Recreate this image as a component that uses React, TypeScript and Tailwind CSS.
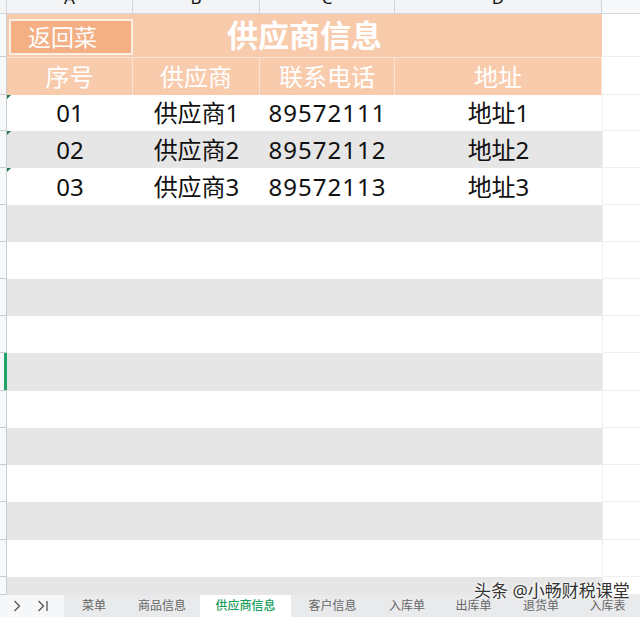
import React from "react";

const COLS = [126, 127, 135, 207];
const LETTERS = ["A", "B", "C", "D"];
const DATA = [
  ["01", "供应商1", "89572111", "地址1"],
  ["02", "供应商2", "89572112", "地址2"],
  ["03", "供应商3", "89572113", "地址3"],
];
const ROW_H = [36, 37, 37, 37, 37, 37, 37, 38, 37, 37, 37, 38, 37, 18];
const TABS: [string, number, boolean][] = [
  ["菜单", 60, false],
  ["商品信息", 76, false],
  ["供应商信息", 91, true],
  ["客户信息", 83, false],
  ["入库单", 66, false],
  ["出库单", 67, false],
  ["退货单", 68, false],
  ["入库表", 65, false],
];

const font = { fontFamily: '"Noto Sans", "Noto Sans CJK SC", sans-serif' };

export default function App() {
  return (
    <div className="relative w-[640px] h-[617px] overflow-hidden bg-white flex flex-col" style={font}>
      {/* column headers */}
      <div className="flex h-[14px] bg-[#f3f4f6] border-b border-[#d4d6da] shrink-0">
        <div className="w-[7px] border-r border-[#d4d6da]" />
        {COLS.map((w, i) => (
          <div
            key={i}
            className="overflow-hidden border-r border-[#d4d6da] flex justify-center"
            style={{ width: w }}
          >
            <span className="text-[17px] leading-[17px] text-[#111] mt-[-11px]">{LETTERS[i]}</span>
          </div>
        ))}
        <div className="flex-1 bg-[#f7f8f9]" />
      </div>

      {/* title row */}
      <div className="flex h-[43px] shrink-0">
        <div className="w-[7px] bg-[#f7f8f9] border-r border-b border-[#c9ccd1]" />
        <div className="relative w-[595px] bg-[#f8cbad] flex items-center justify-center">
          <span className="text-[31px] font-bold text-white leading-none">供应商信息</span>
          <div className="absolute left-[2px] top-[5px] w-[124px] h-[36px] bg-[#f4b084] border-2 border-[#fdeee3] flex items-center pl-[17px]">
            <span className="text-[23px] text-white leading-none">返回菜</span>
          </div>
        </div>
        <div className="flex-1 border-b border-[#eeeeee]" />
      </div>

      {/* header row */}
      <div className="flex h-[38px] shrink-0">
        <div className="w-[7px] bg-[#f7f8f9] border-r border-b border-[#c9ccd1]" />
        {["序号", "供应商", "联系电话", "地址"].map((t, i) => (
          <div
            key={i}
            className="bg-[#f8cbad] border-t border-r border-[#fbe2d2] flex items-center justify-center text-[24px] text-white leading-none"
            style={{ width: COLS[i] }}
          >
            {t}
          </div>
        ))}
        <div className="flex-1 border-b border-[#eeeeee]" />
      </div>

      {/* data rows */}
      {ROW_H.map((h, r) => {
        const row = DATA[r];
        const gray = r % 2 === 1;
        return (
          <div key={r} className="flex shrink-0" style={{ height: h }}>
            <div className="relative w-[7px] bg-[#f7f8f9] border-r border-b border-[#c9ccd1]">
              {r === 7 && <div className="absolute right-[-1px] top-0 bottom-0 w-[3px] bg-[#21a366]" />}
            </div>
            {COLS.map((w, c) => (
              <div
                key={c}
                className={`relative flex items-center justify-center text-[24px] text-[#111] leading-none ${gray ? "bg-[#e6e6e6]" : "bg-white"}`}
                style={{ width: w }}
              >
                {c === 0 && row && (
                  <div className="absolute left-0 top-0 w-0 h-0 border-t-[4px] border-r-[4px] border-t-[#1f7a45] border-r-transparent" />
                )}
                {row ? <span className={c === 2 ? "tracking-[1px]" : ""}>{row[c]}</span> : null}
              </div>
            ))}
            <div className="flex-1 border-l border-b border-[#f0f0f0]" />
          </div>
        );
      })}

      {/* sheet tabs */}
      <div className="flex h-[22px] shrink-0 bg-[#e9eaec] text-[12px] text-[#666]">
        <div className="w-[64px] bg-[#f6f7f8] flex items-center text-[#555]">
          <svg width="8" height="12" viewBox="0 0 8 12" className="ml-[13px]" fill="none" stroke="#555" strokeWidth="1.3">
            <path d="M1.5 1 L6.5 6 L1.5 11" />
          </svg>
          <svg width="12" height="12" viewBox="0 0 12 12" className="ml-[16px]" fill="none" stroke="#555" strokeWidth="1.3">
            <path d="M1.5 1 L6.5 6 L1.5 11" />
            <path d="M10 1 L10 11" />
          </svg>
        </div>
        {TABS.map(([t, w, active]) => (
          <div
            key={t}
            className={`flex items-center justify-center ${active ? "bg-white text-[#17a05c] font-medium" : ""}`}
            style={{ width: w }}
          >
            {t}
          </div>
        ))}
      </div>

      {/* watermark */}
      <div
        className="absolute left-[474px] top-[582px] text-[17px] text-[#333] leading-none whitespace-nowrap"
        style={{ textShadow: "0 0 2px #fff, 0 0 3px #fff, 0 0 4px #fff" }}
      >
        头条 @小畅财税课堂
      </div>
    </div>
  );
}
